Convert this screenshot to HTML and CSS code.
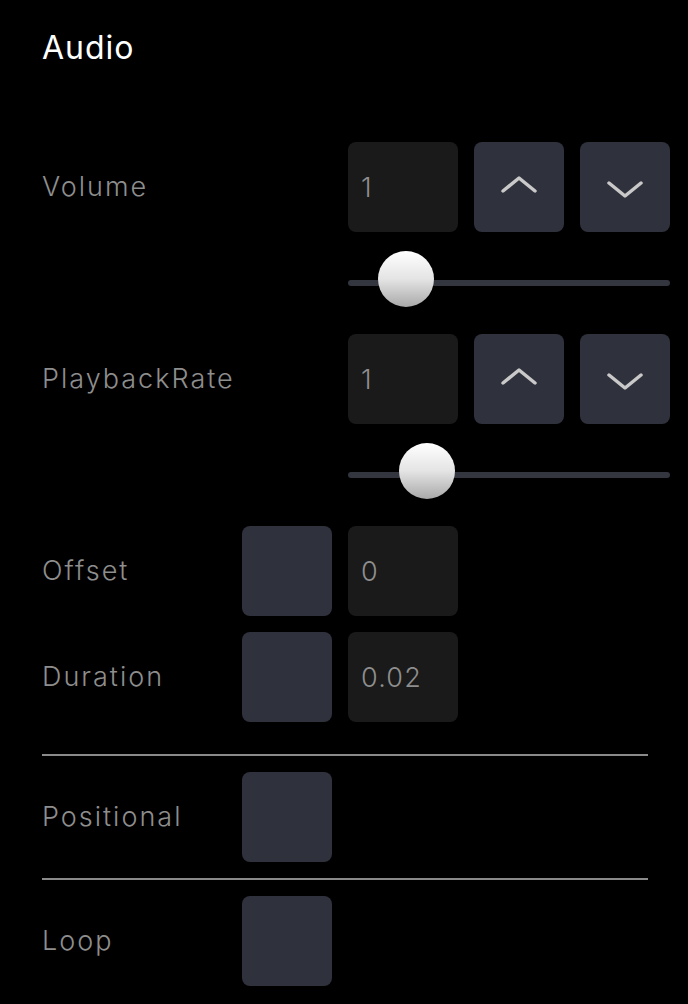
FILE: index.html
```html
<!DOCTYPE html>
<html>
<head>
<meta charset="utf-8">
<link rel="stylesheet" href="styles.css">
</head>
<body>
<div class="panel">
  <h1 class="title">Audio</h1>

  <div class="row">
    <div class="label">Volume</div>
    <div class="controls offset">
      <div class="input">1</div>
      <div class="btn up">
        <svg viewBox="0 0 36 18" width="36" height="18"><polyline points="2,16 18,3 34,16" /></svg>
      </div>
      <div class="btn down">
        <svg viewBox="0 0 36 18" width="36" height="18"><polyline points="2,2 18,15 34,2" /></svg>
      </div>
    </div>
  </div>
  <div class="slider">
    <div class="track"></div>
    <div class="thumb" style="left: 30px"></div>
  </div>

  <div class="row">
    <div class="label">PlaybackRate</div>
    <div class="controls offset">
      <div class="input">1</div>
      <div class="btn up">
        <svg viewBox="0 0 36 18" width="36" height="18"><polyline points="2,16 18,3 34,16" /></svg>
      </div>
      <div class="btn down">
        <svg viewBox="0 0 36 18" width="36" height="18"><polyline points="2,2 18,15 34,2" /></svg>
      </div>
    </div>
  </div>
  <div class="slider">
    <div class="track"></div>
    <div class="thumb" style="left: 51px"></div>
  </div>

  <div class="row">
    <div class="label">Offset</div>
    <div class="controls">
      <div class="check"></div>
      <div class="input">0</div>
    </div>
  </div>
  <div class="row gap">
    <div class="label">Duration</div>
    <div class="controls">
      <div class="check"></div>
      <div class="input">0.02</div>
    </div>
  </div>

  <div class="divider"></div>
  <div class="row">
    <div class="label">Positional</div>
    <div class="controls">
      <div class="check"></div>
    </div>
  </div>
  <div class="divider short"></div>
  <div class="row">
    <div class="label">Loop</div>
    <div class="controls">
      <div class="check"></div>
    </div>
  </div>
</div>
</body>
</html>
```

FILE: styles.css
```css
html, body {
  margin: 0;
  padding: 0;
  background: #000;
}
body {
  font-family: "Inter", "Open Sans", sans-serif;
  color: #8e8e8e;
  width: 688px;
  height: 1004px;
  overflow: hidden;
}
.panel {
  padding: 26px 18px 0 42px;
}
.title {
  margin: 0;
  font-size: 32px;
  font-weight: 400;
  letter-spacing: 1px;
  color: #fff;
  line-height: 44px;
  height: 116px;
}
.row {
  display: flex;
  align-items: center;
  height: 90px;
}
.row.gap {
  margin-top: 16px;
}
.label {
  width: 200px;
  flex: none;
  font-size: 27px;
  font-weight: 300;
  letter-spacing: 2px;
  color: #8e8e8e;
  margin-top: -2px;
}
.controls {
  display: flex;
  gap: 16px;
}
.controls.offset {
  margin-left: 106px;
}
.input {
  width: 110px;
  height: 90px;
  box-sizing: border-box;
  background: #1a1a1a;
  border-radius: 8px;
  padding-left: 13px;
  display: flex;
  align-items: center;
  font-size: 27px;
  font-weight: 300;
  letter-spacing: 1.2px;
  color: #8e8e8e;
}
.btn, .check {
  width: 90px;
  height: 90px;
  background: #2f313c;
  border-radius: 8px;
  display: flex;
  align-items: center;
  justify-content: center;
}
.btn svg {
  display: block;
  fill: none;
  stroke: #c9c9c9;
  stroke-width: 3.5;
  stroke-linecap: round;
  stroke-linejoin: round;
}
.btn.up svg {
  margin-bottom: 6px;
}
.btn.down svg {
  margin-top: 6px;
}
.slider {
  position: relative;
  margin-left: 306px;
  height: 102px;
}
.track {
  position: absolute;
  left: 0;
  right: 0;
  top: 48px;
  height: 6px;
  border-radius: 3px;
  background: #33353f;
}
.thumb {
  position: absolute;
  top: 19px;
  width: 56px;
  height: 56px;
  border-radius: 50%;
  background: linear-gradient(180deg, #ffffff 0%, #e4e4e4 50%, #a9a9a9 100%);
}
.divider {
  height: 2px;
  background: #8a8a8a;
  margin: 32px 22px 16px 0;
}
.divider.short {
  margin-top: 16px;
}
```
